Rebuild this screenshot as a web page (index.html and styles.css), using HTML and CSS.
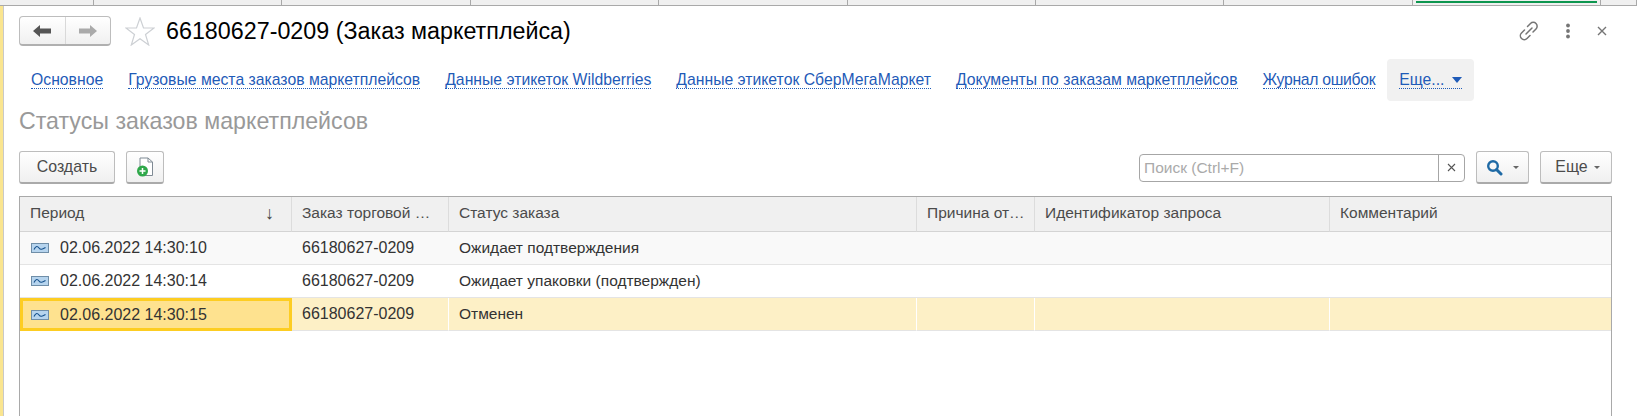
FILE: index.html
```html
<!DOCTYPE html>
<html lang="en">
<head>
  <meta charset="UTF-8">
  <title>Статусы заказов маркетплейсов</title>
  <link rel="stylesheet" href="styles.css">
</head>
<body>

<div class="tabs">
  <div class="tab"></div>
  <div class="tab"></div>
  <div class="tab"></div>
  <div class="tab"></div>
  <div class="tab"></div>
  <div class="tab"></div>
  <div class="tab"></div>
  <div class="tab"></div>
  <div class="tab active"></div>
  <div class="tab"></div>
</div>

<div class="window">
  <div class="title-row">
    <div class="nav-buttons">
      <button class="nav-btn">
        <svg width="18" height="12" viewBox="0 0 18 12"><path d="M0 6 7 0V3.500H18V8.500H7V12Z" fill="#555"/></svg>
      </button>
      <button class="nav-btn">
        <svg width="18" height="12" viewBox="0 0 18 12"><path d="M18 6 11 0V3.500H0V8.500H11V12Z" fill="#aaa"/></svg>
      </button>
    </div>
    <svg class="star" width="30" height="29" viewBox="0 0 30 29"><path d="M15 1 18.500 11H29L20.500 17.500 23.700 28 15 21.700 6.300 28 9.500 17.500 1 11H11.500Z" fill="none" stroke="#cdd0d4" stroke-width="1.200"/></svg>
    <h1 class="title">66180627-0209 (Заказ маркетплейса)</h1>
    <div class="window-actions">
      <svg width="20" height="20" viewBox="0 0 20 20"><g fill="none" stroke="#757575" stroke-width="1.500" stroke-linecap="round"><path d="M8.500 5.500 11.500 2.500A3.600 3.600 0 0 1 17 8L14 11"/><path d="M11 14.500 8 17.500A3.600 3.600 0 0 1 2.500 12L5.500 9"/><path d="M7 13 13 7"/></g></svg>
      <svg width="6" height="16" viewBox="0 0 6 16"><g fill="#757575"><circle cx="3" cy="2.500" r="1.900"/><circle cx="3" cy="8" r="1.900"/><circle cx="3" cy="13.500" r="1.900"/></g></svg>
      <svg width="10" height="10" viewBox="0 0 10 10"><path d="M1 1 9 9M9 1 1 9" stroke="#757575" stroke-width="1.400"/></svg>
    </div>
  </div>

  <nav class="links">
    <a class="link">Основное</a>
    <a class="link">Грузовые места заказов маркетплейсов</a>
    <a class="link">Данные этикеток Wildberries</a>
    <a class="link">Данные этикеток СберМегаМаркет</a>
    <a class="link">Документы по заказам маркетплейсов</a>
    <a class="link link-narrow">Журнал ошибок</a>
    <div class="links-more"><a class="link">Еще... <span class="more-arrow"></span></a></div>
  </nav>

  <h2 class="subtitle">Статусы заказов маркетплейсов</h2>

  <div class="toolbar">
    <button class="btn btn-create">Создать</button>
    <button class="btn btn-new">
      <svg width="17" height="20" viewBox="0 0 17 20"><path d="M3 1H11L15.500 5V18.500H3Z" fill="#fff" stroke="#7f8a94"/><path d="M11 1V5H15.500" fill="none" stroke="#7f8a94"/><circle cx="5.500" cy="14" r="5.500" fill="#2fa84a"/><path d="M5.500 11V17M2.500 14H8.500" stroke="#fff" stroke-width="1.500"/></svg>
    </button>
    <div class="search">
      <div class="search-input">Поиск (Ctrl+F)</div>
      <div class="search-clear">
        <svg width="9" height="9" viewBox="0 0 9 9"><path d="M1 1 8 8M8 1 1 8" stroke="#555" stroke-width="1.100"/></svg>
      </div>
    </div>
    <button class="btn btn-search">
      <svg width="17" height="17" viewBox="0 0 17 17"><circle cx="7" cy="7" r="4.800" fill="none" stroke="#1f6aa5" stroke-width="2.400"/><path d="M10.500 10.500 15 15" stroke="#1f6aa5" stroke-width="3" stroke-linecap="round"/></svg>
      <span class="caret"></span>
    </button>
    <button class="btn btn-more">Еще <span class="caret"></span></button>
  </div>

  <div class="grid-wrap">
    <table class="grid">
      <colgroup>
        <col class="col-period"><col class="col-order"><col class="col-status">
        <col class="col-reason"><col class="col-request"><col>
      </colgroup>
      <thead>
        <tr>
          <th><div class="th-period">Период <span class="sort-arrow">↓</span></div></th>
          <th>Заказ торговой …</th>
          <th>Статус заказа</th>
          <th>Причина от…</th>
          <th>Идентификатор запроса</th>
          <th>Комментарий</th>
        </tr>
      </thead>
      <tbody>
        <tr class="alt">
          <td><div class="period">
            <svg class="rec-icon" width="18" height="10" viewBox="0 0 18 10"><rect x=".5" y=".5" width="17" height="9" fill="#b6d4ee" stroke="#6f8ea8"/><path d="M3 6.500C5 2.500 6.500 3 8 5S11 6.500 14.500 4.500" fill="none" stroke="#14508c" stroke-width="1.200"/></svg>
            <span class="digits">02.06.2022 14:30:10</span></div></td>
          <td class="digits">66180627-0209</td>
          <td>Ожидает подтверждения</td>
          <td></td><td></td><td></td>
        </tr>
        <tr>
          <td><div class="period">
            <svg class="rec-icon" width="18" height="10" viewBox="0 0 18 10"><rect x=".5" y=".5" width="17" height="9" fill="#b6d4ee" stroke="#6f8ea8"/><path d="M3 6.500C5 2.500 6.500 3 8 5S11 6.500 14.500 4.500" fill="none" stroke="#14508c" stroke-width="1.200"/></svg>
            <span class="digits">02.06.2022 14:30:14</span></div></td>
          <td class="digits">66180627-0209</td>
          <td>Ожидает упаковки (подтвержден)</td>
          <td></td><td></td><td></td>
        </tr>
        <tr class="selected">
          <td class="current"><div class="period">
            <svg class="rec-icon" width="18" height="10" viewBox="0 0 18 10"><rect x=".5" y=".5" width="17" height="9" fill="#b6d4ee" stroke="#6f8ea8"/><path d="M3 6.500C5 2.500 6.500 3 8 5S11 6.500 14.500 4.500" fill="none" stroke="#14508c" stroke-width="1.200"/></svg>
            <span class="digits">02.06.2022 14:30:15</span></div></td>
          <td class="digits">66180627-0209</td>
          <td>Отменен</td>
          <td></td><td></td><td></td>
        </tr>
      </tbody>
    </table>
  </div>
</div>

</body>
</html>
```

FILE: styles.css
```css
* {
  box-sizing: border-box;
}

html, body {
  height: 100%;
}

body {
  margin: 0;
  overflow: hidden;
  display: flex;
  flex-direction: column;
  font-family: "Liberation Sans", Arial, sans-serif;
  font-size: 15.5px;
  color: #333;
  background: #fff;
}

/* Top tab strip, only its bottom edge is in view */
.tabs {
  height: 6px;
  flex: none;
  display: grid;
  grid-template-columns: 94px repeat(8, 188.4px) 1fr;
  background: #f0f0f0;
  border-bottom: 1px solid #a9a9a9;
}

.tab {
  border-right: 1px solid #a9a9a9;
  padding: 1px 3px 0;
}

.tab.active::before {
  content: "";
  display: block;
  height: 2px;
  background: #0d964f;
}

.window {
  flex: 1;
  min-height: 0;
  display: flex;
  flex-direction: column;
  padding: 0 25px 0 16px;
  border-left: 3px solid #fae58f;
  box-shadow: inset 1px 0 0 #c9c9c9;
}

.title-row {
  display: flex;
  align-items: center;
  height: 30px;
  margin-top: 10px;
}

.nav-buttons {
  display: flex;
  width: 92px;
  height: 30px;
  border: 1px solid #bdbdbd;
  border-bottom: 2px solid #b0b0b0;
  border-radius: 4px;
  background: linear-gradient(#fff, #f0f0f0);
}

.nav-btn {
  flex: 1;
  padding: 0;
  border: none;
  background: none;
  display: flex;
  align-items: center;
  justify-content: center;
}

.nav-btn + .nav-btn {
  border-left: 1px solid #d9d9d9;
}

.star {
  margin-left: 14px;
}

.title {
  margin: 0 0 0 11px;
  font-size: 23.3px;
  font-weight: normal;
  color: #000;
}

.window-actions {
  margin-left: auto;
  display: flex;
  align-items: center;
  gap: 26px;
  padding-right: 5px;
}

.links {
  display: flex;
  align-items: center;
  gap: 25px;
  height: 42px;
  margin-top: 13px;
  padding-left: 12px;
  font-size: 15.75px;
}

.link {
  color: #1f5bb8;
  border-bottom: 1px dotted #1f5bb8;
  line-height: 16px;
  white-space: nowrap;
}

.link-narrow {
  letter-spacing: -0.3px;
}

.links-more {
  height: 42px;
  margin-left: -13px;
  padding: 0 12px;
  display: flex;
  align-items: center;
  background: #f1f1f1;
  border-radius: 4px;
}

.more-arrow {
  display: inline-block;
  margin: 0 0 2px 3px;
  border: 5px solid transparent;
  border-top: 6px solid #1f5bb8;
  border-bottom: none;
}

.subtitle {
  margin: 8px 0 0;
  font-size: 23.2px;
  font-weight: normal;
  line-height: 24px;
  color: #999;
}

.toolbar {
  display: flex;
  align-items: center;
  height: 33px;
  margin-top: 18px;
}

.btn {
  height: 33px;
  padding: 0;
  border: 1px solid #bdbdbd;
  border-bottom: 2px solid #aaa;
  border-radius: 3px;
  background: linear-gradient(#fff, #f0f0f0);
  font-family: inherit;
  font-size: 15.9px;
  color: #4b4b4b;
  display: flex;
  align-items: center;
  justify-content: center;
}

.btn-create {
  width: 96px;
}

.btn-new {
  width: 38px;
  margin-left: 11px;
}

.search {
  display: flex;
  width: 326px;
  height: 28px;
  margin-left: auto;
  border: 1px solid #a6a6a6;
  border-radius: 4px;
}

.search-input {
  flex: 1;
  padding-left: 4px;
  line-height: 26px;
  color: #aaa;
}

.search-clear {
  width: 26px;
  border-left: 1px solid #a6a6a6;
  display: flex;
  align-items: center;
  justify-content: center;
}

.btn-search {
  width: 53px;
  margin-left: 11px;
  gap: 10px;
}

.btn-more {
  width: 72px;
  margin-left: 11px;
  padding-left: 3px;
  gap: 6px;
}

.caret {
  border: 3px solid transparent;
  border-top: 3px solid #666;
  border-bottom: none;
}

.grid-wrap {
  flex: 1;
  min-height: 0;
  margin-top: 12px;
  border: 1px solid #a9a9a9;
  border-bottom: none;
}

.grid {
  width: 100%;
  table-layout: fixed;
  border-collapse: separate;
  border-spacing: 0;
}

.col-period { width: 272px; }
.col-order { width: 157px; }
.col-status { width: 468px; }
.col-reason { width: 118px; }
.col-request { width: 295px; }

.grid th {
  height: 35px;
  padding: 0 10px 2px;
  background: #f0f0f0;
  border-right: 1px solid #dcdcdc;
  border-bottom: 1px solid #d4d4d4;
  font-weight: normal;
  text-align: left;
  color: #4b4b4b;
  white-space: nowrap;
  overflow: hidden;
}

.grid th:last-child,
.grid td:last-child {
  border-right: none;
}

.th-period {
  display: flex;
  justify-content: space-between;
  padding-right: 7px;
}

.sort-arrow {
  font-size: 18px;
  line-height: 18px;
  color: #444;
}

.grid td {
  height: 33px;
  padding: 0 10px;
  border-bottom: 1px solid #e4e4e4;
  white-space: nowrap;
}

.grid .digits {
  font-size: 16px;
}

.alt td {
  background: #f9f9f9;
}

.selected td {
  background: #fdf0c6;
  border-right: 1px solid #fff;
}

.selected td.current {
  padding: 0 7px;
  background: #fee28f;
  border: 3px solid #fdcd22;
}

.period {
  display: flex;
  align-items: center;
}

.rec-icon {
  margin: 0 11px 0 1px;
}
```
